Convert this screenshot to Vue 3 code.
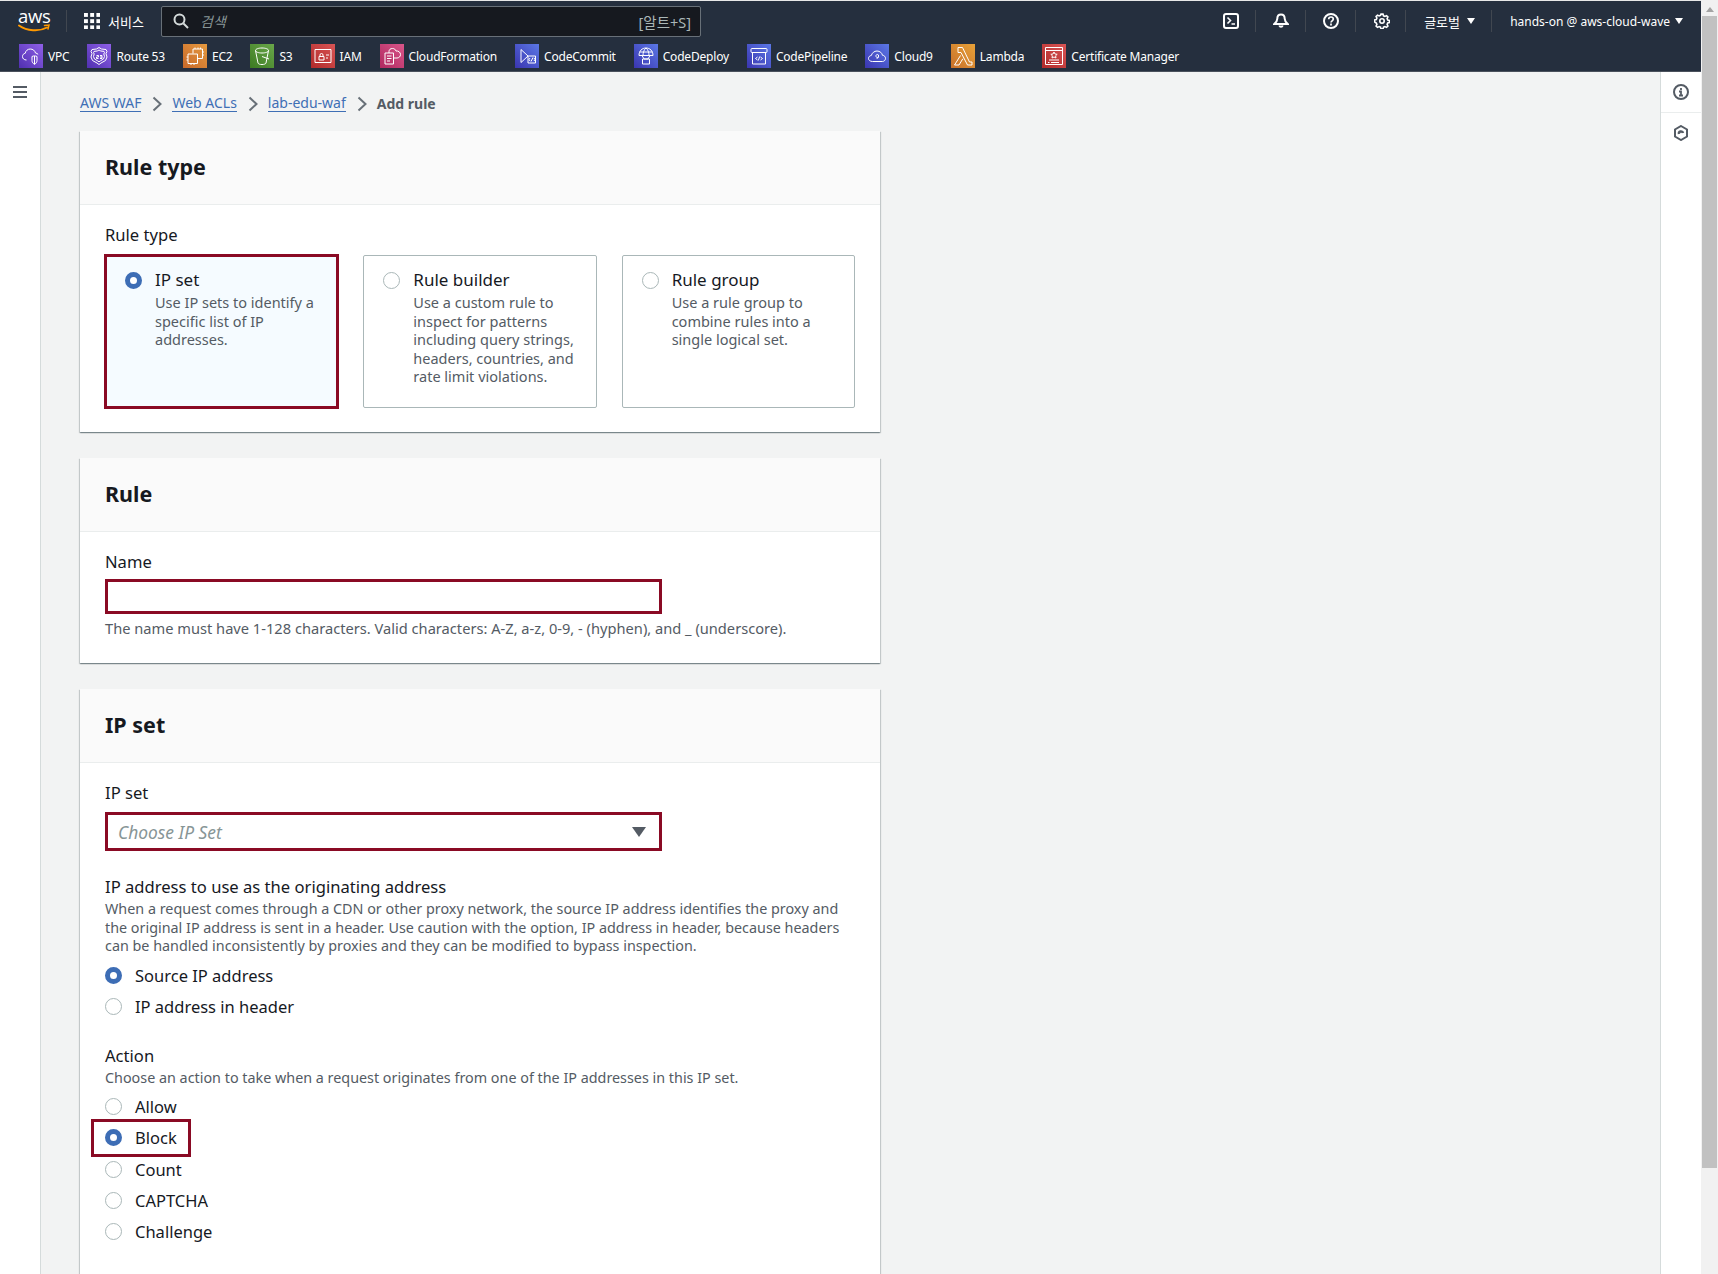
<script setup>
const services = [
  { label: 'VPC', bg: 'purple', paths: ['M7.5 16C5 16 3.5 14.5 3.5 12.5c0-1.8 1.2-3 2.7-3.2C6.6 6.8 8.7 5 11.3 5c2.5 0 4.6 1.6 5.2 4 1.1.2 2 .6 2.7 1.5', 'M13 12.5c1.5-.8 3.500-.8 5 0v4c0 1.800-1.100 3-2.500 4-1.400-1-2.500-2.200-2.500-4z', 'M15.500 12v8'] },
  { label: 'Route 53', bg: 'purple', paths: ['M12 3.500l2.500 1.500 4.500.5 1 2-1 2 1 3.500-1.500 3.500L14 19l-2 1.500L10 19l-4.500-2.500L4 13l1-3.500-1-2 1-2 4.500-.5z', 'M12 6l1.800 1 3.200.4.500 1-.7 1.600.7 2.500-1 2.500-3 1.800-1.500 1-1.500-1-3-1.800-1-2.500.7-2.500L6.500 8.400l.5-1 3.200-.4z', 'M9.500 11.500h2v1.500h-2v1.500h2M13 11.500h2v3h-2M13 13h2'] },
  { label: 'EC2', bg: 'orange', paths: ['M10 9.500V5h9.500v9.500H15', 'M5 10h9.500v9.500H5z', 'M12 5V3.500M15 5V3.500M17.500 5V3.500M21 8h-1.500M21 11h-1.500', 'M3.500 13H5M3.500 16H5M8 21v-1.500M11 21v-1.500'] },
  { label: 'S3', bg: 'green', paths: ['M5.500 6.500c0-1.500 3-2.500 6.500-2.500s6.500 1 6.500 2.500S15.500 9 12 9 5.500 8 5.500 6.500z', 'M5.500 6.500L8 19c.3 1 2 1.500 4 1.500s3.700-.5 4-1.500l2.500-12.500', 'M12 12.500l7 2.500'] },
  { label: 'IAM', bg: 'red', paths: ['M4 5.500h16v13H4z', 'M8 12.500h5v3.500H8zM9 12.500v-1.500a1.500 1.500 0 0 1 3 0v1.500', 'M15 11h3M15 14h2'] },
  { label: 'CloudFormation', bg: 'pink', paths: ['M5 9h8.500v11H5z', 'M7 12h4.500M7 14.500h4.500M7 17h3', 'M9 9V7.500C9 5.500 10.500 4.500 12.500 4.500c1.800 0 3 1 3.500 2.500 2.300-.4 4.500 1.300 4.500 3.500s-1.700 3.500-3.500 3.500h-3.500'] },
  { label: 'CodeCommit', bg: 'indigo', paths: ['M6 5.500v13M6 5.500l7 6.500-7 6.500M6 5.500h0M13 12h7.500v7H13z', 'M15 14l-1 1.500 1 1.500M19 14l1 1.500-1 1.500M18 13.500l-2 4'] },
  { label: 'CodeDeploy', bg: 'indigo', paths: ['M5 11.500C5 7 8 4 12 4s7 3 7 7.500zM12 4c-2 1.500-3 4.500-3 7.500M12 4c2 1.500 3 4.500 3 7.500M5.500 8h13', 'M8 11.500l2 3.500h4l2-3.500', 'M8.500 15h7v5h-7z'] },
  { label: 'CodePipeline', bg: 'indigo', paths: ['M5 4.500h14a1 1 0 0 1 1 1v2a1 1 0 0 1-1 1H5a1 1 0 0 1-1-1v-2a1 1 0 0 1 1-1z', 'M5.500 8.500v11.500h13V8.500', 'M10.500 13l-2 1.500 2 1.500M13.500 13l2 1.500-2 1.500M12.700 12.500l-1.400 4'] },
  { label: 'Cloud9', bg: 'indigo', paths: ['M7.500 17.500C5 17.500 3.500 16 3.500 14.500c0-1.700 1.200-2.800 2.800-3C7 9 9.200 7 12 7c3 0 5 2 5.500 4.300 1.800 0 3 1.500 3 3.100 0 1.700-1.400 3.100-3 3.100z', 'M13.500 11a1.500 1.500 0 1 0-1 2.500c.6 0 1-.3 1-.8V11c0 1.800-.3 3.500-1.800 3.500'] },
  { label: 'Lambda', bg: 'amber', paths: ['M7 3.500h4.500l7 14.500h2.500v3h-4.500L10 8.500H7z', 'M9.500 11.500L3.500 21h4.500l3.800-6.200'] },
  { label: 'Certificate Manager', bg: 'red', paths: ['M3.500 3.500h17v17h-17z', 'M3.500 6.500h17', 'M12 8l1 2 2.200.3-1.600 1.500.4 2.200-2-1-2 1 .4-2.200-1.600-1.500L11 10z', 'M7 16h10M9 18.500h8M6 18.500h1.500'] },
]
const crumbs = ['AWS WAF', 'Web ACLs', 'lab-edu-waf']
const ruleTypes = [
  { title: 'IP set', on: true, desc: 'Use IP sets to identify a specific list of IP addresses.' },
  { title: 'Rule builder', on: false, desc: 'Use a custom rule to inspect for patterns including query strings, headers, countries, and rate limit violations.' },
  { title: 'Rule group', on: false, desc: 'Use a rule group to combine rules into a single logical set.' },
]
const actions = [
  { label: 'Allow', on: false },
  { label: 'Block', on: true },
  { label: 'Count', on: false },
  { label: 'CAPTCHA', on: false },
  { label: 'Challenge', on: false },
]
</script>

<template>
  <div class="page">
    <div class="viewport">
      <header class="top">
        <div class="row1">
          <div class="logo">
            <span class="aws">aws</span>
            <svg class="smile" width="32" height="9" viewBox="0 0 32 9" fill="none">
              <path d="M1 1.500C9 7 21 8 29 3.500" stroke="#f90" stroke-width="2" stroke-linecap="round" />
              <path d="M26.500 1.500l4.500-.5-1 4" stroke="#f90" stroke-width="1.500" stroke-linecap="round" />
            </svg>
          </div>
          <span class="vsep first"></span>
          <svg class="grid" width="16" height="16" viewBox="0 0 16 16" fill="#fff">
            <rect v-for="c in 9" :key="c" :x="((c - 1) % 3) * 6.200" :y="Math.floor((c - 1) / 3) * 6.200" width="3.900" height="3.900" />
          </svg>
          <span class="svc">서비스</span>
          <div class="search">
            <svg width="16" height="16" viewBox="0 0 16 16" fill="none" stroke="#d5dbdb" stroke-width="2">
              <circle cx="6.500" cy="6.500" r="5" />
              <path d="M10.500 10.500L15 15" />
            </svg>
            <span class="ph">검색</span>
            <span class="kbd">[알트+S]</span>
          </div>
          <div class="tools">
            <svg class="t-ic" width="16" height="16" viewBox="0 0 16 16" fill="none" stroke="#fff" stroke-width="2">
              <rect x="1" y="1" width="14" height="14" rx="2" />
              <path d="M4.500 4.500L7.500 7.500 4.500 10.500M8.500 11h3.500" stroke-width="1.600" />
            </svg>
            <span class="vsep"></span>
            <svg class="t-ic" width="16" height="16" viewBox="0 0 16 16" fill="none" stroke="#fff" stroke-width="2">
              <path d="M8 1.500c-2.500 0-3.700 2-3.700 4.300 0 2.300-1.300 3.700-3 5.200h13.400c-1.700-1.500-3-2.900-3-5.200C11.700 3.500 10.500 1.500 8 1.500z" />
              <path d="M6.300 12.500a1.800 1.800 0 0 0 3.400 0" />
            </svg>
            <span class="vsep"></span>
            <svg class="t-ic" width="16" height="16" viewBox="0 0 16 16" fill="none" stroke="#fff" stroke-width="2">
              <circle cx="8" cy="8" r="7" />
              <path d="M5.700 6.200C5.700 4.900 6.700 4 8 4s2.300.9 2.300 2.100c0 1.700-2.300 1.800-2.300 3.400" stroke-width="1.700" />
              <path d="M8 10.600v1.800" stroke-width="1.700" />
            </svg>
            <span class="vsep"></span>
            <svg class="t-ic gear" width="16" height="16" viewBox="0 0 16 16" fill="none" stroke="#fff" stroke-width="1.600">
              <circle cx="8" cy="8" r="2.200" />
              <path d="M8 1l1 .1.500 1.700 1.400.6 1.600-.8 1.400 1.400-.8 1.600.6 1.400 1.700.5v2l-1.700.5-.6 1.400.8 1.600-1.400 1.400-1.600-.8-1.400.6-.5 1.700H7l-.5-1.700-1.400-.6-1.600.8-1.400-1.400.8-1.600-.6-1.400L.6 9V7l1.700-.5.6-1.400-.8-1.600 1.400-1.400 1.600.8 1.400-.6L7 1.100z" />
            </svg>
            <span class="vsep"></span>
            <span class="region">글로벌</span>
            <span class="caret"></span>
            <span class="vsep"></span>
            <span class="acct">hands-on @ aws-cloud-wave</span>
            <span class="caret"></span>
          </div>
        </div>
        <nav class="row2">
          <div v-for="s in services" :key="s.label" class="svc-item">
            <span class="tile" :class="s.bg">
              <svg width="24" height="24" viewBox="0 0 24 24" fill="none" stroke="#fff" stroke-width="1">
                <path v-for="(d, i) in s.paths" :key="i" :d="d" />
              </svg>
            </span>
            <span class="svc-label">{{ s.label }}</span>
          </div>
        </nav>
      </header>

      <div class="body">
        <aside class="left">
          <svg width="14" height="12" viewBox="0 0 14 12" stroke="#545b64" stroke-width="2">
            <path d="M0 1h14M0 6h14M0 11h14" />
          </svg>
        </aside>

        <main class="content">
          <div class="crumbs">
            <template v-for="c in crumbs" :key="c">
              <a class="crumb">{{ c }}</a>
              <svg class="chev" width="10" height="16" viewBox="0 0 10 16" fill="none" stroke="#687078" stroke-width="2">
                <path d="M1.500 1.500L8.500 8l-7 6.500" />
              </svg>
            </template>
            <span class="cur">Add rule</span>
          </div>

          <section class="card">
            <h2 class="card-h">Rule type</h2>
            <div class="card-b b1">
              <div class="lbl">Rule type</div>
              <div class="tiles">
                <div v-for="r in ruleTypes" :key="r.title" class="rt" :class="{ on: r.on }">
                  <span class="radio" :class="{ on: r.on }"></span>
                  <div>
                    <div class="rt-t">{{ r.title }}</div>
                    <div class="desc">{{ r.desc }}</div>
                  </div>
                </div>
              </div>
            </div>
          </section>

          <section class="card">
            <h2 class="card-h">Rule</h2>
            <div class="card-b b2">
              <div class="lbl">Name</div>
              <div class="input mark"></div>
              <div class="desc help">The name must have 1-128 characters. Valid characters: A-Z, a-z, 0-9, - (hyphen), and _ (underscore).</div>
            </div>
          </section>

          <section class="card">
            <h2 class="card-h">IP set</h2>
            <div class="card-b b3">
              <div class="lbl">IP set</div>
              <div class="select mark">
                <span class="placeholder">Choose IP Set</span>
                <span class="sel-caret"></span>
              </div>
              <div class="lbl gap-a">IP address to use as the originating address</div>
              <div class="desc d2">When a request comes through a CDN or other proxy network, the source IP address identifies the proxy and the original IP address is sent in a header. Use caution with the option, IP address in header, because headers can be handled inconsistently by proxies and they can be modified to bypass inspection.</div>
              <div class="opt first-opt"><span class="radio on"></span><span>Source IP address</span></div>
              <div class="opt"><span class="radio"></span><span>IP address in header</span></div>
              <div class="lbl gap-b">Action</div>
              <div class="desc d2">Choose an action to take when a request originates from one of the IP addresses in this IP set.</div>
              <div class="acts">
                <div v-for="a in actions" :key="a.label" class="opt" :class="{ mark2: a.on }">
                  <span class="radio" :class="{ on: a.on }"></span><span>{{ a.label }}</span>
                </div>
              </div>
            </div>
          </section>
        </main>

        <aside class="rail">
          <div class="rail-cell">
            <svg width="16" height="16" viewBox="0 0 16 16" fill="none" stroke="#545b64" stroke-width="2">
              <circle cx="8" cy="8" r="7" />
              <path d="M6 7.500h2v4M6 11.500h4M8 4v2" stroke-width="1.800" />
            </svg>
          </div>
          <div class="rail-cell">
            <svg width="16" height="16" viewBox="0 0 16 16" fill="none" stroke="#545b64" stroke-width="2">
              <path d="M8 1l6 3.500v7L8 15l-6-3.500v-7z" />
              <path d="M6 9a2 2 0 0 1 4-1" stroke-width="2.500" />
            </svg>
          </div>
        </aside>
      </div>
    </div>

    <div class="scrollbar">
      <span class="sb-up"></span>
      <span class="sb-thumb"></span>
    </div>
  </div>
</template>

<style>
html, body { margin: 0; overflow: hidden; }
</style>

<style scoped>
.page {
  display: flex;
  width: 1718px;
  height: 1274px;
  overflow: hidden;
  background: #f2f3f3;
  font-family: "Noto Sans", "Noto Sans CJK KR", sans-serif;
  color: #16191f;
}
.viewport { flex: 1; min-width: 0; display: flex; flex-direction: column; }

.top {
  height: 72px;
  box-sizing: border-box;
  background: #252f3e;
  border-top: 1px solid #e8e8e8;
  border-bottom: 1px solid #4a515c;
  color: #fff;
  flex: none;
}
.row1 { height: 40px; display: flex; align-items: center; padding-left: 18px; padding-right: 18px; }
.logo { width: 32px; height: 24px; position: relative; flex: none; margin-top: -5px; }
.aws {
  display: block;
  font-family: "Open Sans", sans-serif;
  font-size: 18.500px;
  line-height: 18px;
  letter-spacing: -0.3px;
  text-align: center;
}
.smile { position: absolute; left: 0; top: 17px; }
.vsep { width: 1px; height: 22px; background: #414750; flex: none; }
.vsep.first { margin-left: 16px; }
.grid { margin-left: 17px; flex: none; }
.svc { margin-left: 8px; font-size: 13px; width: 36px; white-space: nowrap; }
.search {
  margin-left: 17px;
  width: 540px;
  height: 31px;
  box-sizing: border-box;
  border: 1px solid #687078;
  border-radius: 2px;
  background: #16191f;
  display: flex;
  align-items: center;
  padding: 0 9px 0 11px;
  flex: none;
}
.ph { margin-left: 11px; font-style: italic; font-size: 14px; color: #879596; }
.kbd { margin-left: auto; font-size: 14.500px; color: #aab7b8; }
.tools { margin-left: auto; display: flex; align-items: center; font-size: 12px; }
.t-ic { margin: 0 16px 0 17px; flex: none; }
.t-ic.gear { margin-left: 18px; margin-right: 15px; }
.region { margin-left: 18px; width: 38px; white-space: nowrap; font-size: 13px; }
.acct { margin-left: 18px; white-space: nowrap; }
.caret {
  width: 0; height: 0; flex: none;
  margin: 0 16px 0 5px;
  border-left: 4px solid transparent;
  border-right: 4px solid transparent;
  border-top: 6px solid #fff;
}
.tools .caret:last-child { margin-right: 0; }

.row2 { display: flex; align-items: center; height: 28px; padding-left: 19px; margin-top: 1px; }
.svc-item { display: flex; align-items: center; margin-right: 18px; flex: none; }
.tile { width: 24px; height: 24px; display: block; flex: none; }
.tile svg { display: block; }
.purple { background: linear-gradient(45deg, #5030b0, #8f60e8); }
.orange { background: linear-gradient(45deg, #c8692a, #e69a3f); }
.green { background: linear-gradient(45deg, #3c7a22, #6aa84a); }
.red { background: linear-gradient(45deg, #b02a2a, #d95555); }
.pink { background: linear-gradient(45deg, #b0285f, #d9568a); }
.indigo { background: linear-gradient(45deg, #3a35b0, #5b78e6); }
.amber { background: linear-gradient(45deg, #c8702a, #e8a238); }
.svc-label { margin-left: 5px; font-size: 12px; letter-spacing: -0.200px; white-space: nowrap; }

.body { flex: 1; display: flex; min-height: 0; }
.left {
  width: 41px;
  flex: none;
  box-sizing: border-box;
  background: #fff;
  border-right: 1px solid #d5dbdb;
  padding: 14px 0 0 13px;
}
.left svg { display: block; }
.content { flex: 1; min-width: 0; padding-left: 39px; }

.crumbs { display: flex; align-items: center; height: 59px; box-sizing: border-box; padding-top: 4px; font-size: 14px; }
.crumb { color: #3f6fb5; border-bottom: 1px solid #3f6fb5; line-height: 16px; }
.chev { margin: 0 10px 0 11px; flex: none; }
.cur { color: #545b64; font-weight: 700; }

.card {
  width: 800px;
  background: #fff;
  box-shadow: 0 1px 1px 0 rgba(0, 28, 36, .3), 1px 1px 1px 0 rgba(0, 28, 36, .15), -1px 1px 1px 0 rgba(0, 28, 36, .15);
  margin-bottom: 26px;
}
.card-h {
  margin: 0;
  height: 74px;
  box-sizing: border-box;
  background: #fafafa;
  border-bottom: 1px solid #eaeded;
  padding: 0 25px;
  font-size: 21.500px;
  font-weight: 700;
  line-height: 71px;
}
.card-b { padding: 20px 25px 25px; }
.lbl { font-size: 16.600px; line-height: 22px; }
.desc { font-size: 14.500px; line-height: 18.600px; color: #545b64; }

.b1 { height: 227px; box-sizing: border-box; padding-top: 19px; }
.tiles { display: flex; gap: 25px; margin-top: 9px; }
.rt {
  flex: 1;
  height: 153px;
  box-sizing: border-box;
  border: 1px solid #aab7b8;
  border-radius: 2px;
  padding: 11px 19px;
  display: flex;
  gap: 13px;
}
.rt.on { background: #f5fbff; outline: 3px solid #8a0a24; outline-offset: -2px; border-color: #8a0a24; border-radius: 0; }
.rt-t { font-size: 17px; line-height: 26px; }
.rt .radio { margin-top: 5px; }

.radio {
  width: 17px;
  height: 17px;
  box-sizing: border-box;
  border: 1.500px solid #aab7b8;
  border-radius: 50%;
  background: #fff;
  flex: none;
  display: block;
}
.radio.on { border: 5.500px solid #3d6db5; }

.b2 { height: 131px; box-sizing: border-box; padding-top: 19px; }
.input { width: 557px; height: 35px; margin-top: 6px; background: #fff; box-sizing: border-box; }
.mark { outline: 3px solid #8a0a24; outline-offset: -3px; }
.help { margin-top: 5px; font-size: 14.650px; }

.b3 { padding-top: 19px; padding-bottom: 80px; }
.select {
  width: 557px;
  height: 39px;
  margin-top: 8px;
  display: flex;
  align-items: center;
  padding: 0 16px 0 13px;
  box-sizing: border-box;
  justify-content: space-between;
}
.placeholder { font-style: italic; color: #879596; font-size: 17.400px; }
.sel-caret {
  width: 0; height: 0;
  border-left: 7px solid transparent;
  border-right: 7px solid transparent;
  border-top: 10px solid #545b64;
}
.gap-a { margin-top: 25px; }
.gap-b { margin-top: 23px; }
.d2 { margin-top: 2px; font-size: 14.350px; }
.opt { display: flex; align-items: center; gap: 13px; font-size: 16.500px; height: 31.300px; }
.first-opt { margin-top: 4px; }
.acts { margin-top: 3px; }
.mark2 { outline: 3px solid #8a0a24; width: 94px; margin-left: -11px; padding-left: 11px; box-sizing: border-box; }

.rail { width: 41px; box-sizing: border-box; flex: none; background: #fff; border-left: 1px solid #d5dbdb; }
.rail-cell {
  height: 40px;
  display: flex;
  align-items: center;
  justify-content: center;
  border-bottom: 1px solid #eaeded;
}
.rail-cell:last-child { border-bottom: 0; }

.scrollbar { width: 17px; flex: none; background: #f1f1f1; display: flex; flex-direction: column; align-items: center; }
.sb-up {
  width: 0; height: 0; margin: 7px 0 4px;
  border-left: 4px solid transparent;
  border-right: 4px solid transparent;
  border-bottom: 5px solid #a3a3a3;
}
.sb-thumb { width: 15px; height: 1152px; background: #c1c1c1; }
</style>
